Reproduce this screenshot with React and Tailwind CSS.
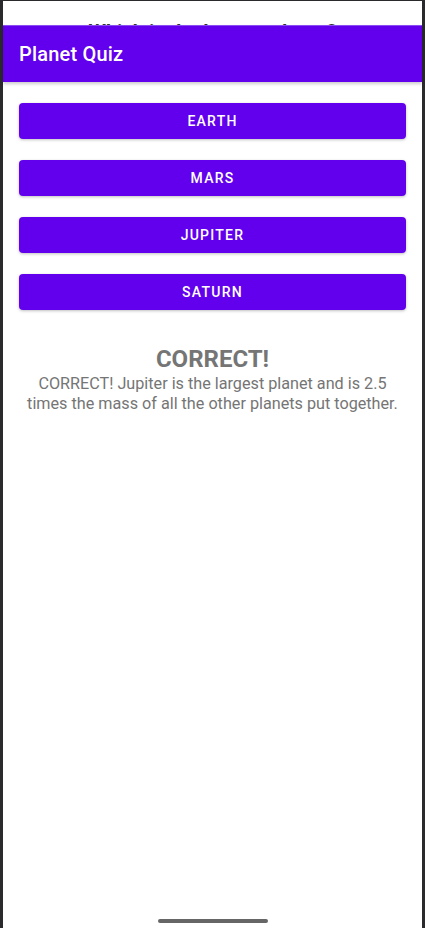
import React from 'react';

const answers = ['EARTH', 'MARS', 'JUPITER', 'SATURN'];

export default function App() {
  return (
    <div className="w-full h-[928px] bg-[#2a2a2c] pt-px px-[3px] overflow-hidden" style={{ fontFamily: 'Roboto, "Noto Sans", sans-serif' }}>
      <div className="relative h-full bg-white flex flex-col">
        {/* question text, mostly hidden behind the app bar */}
        <div className="absolute top-[19px] left-0 right-0 text-center text-[20px] leading-6 font-bold text-[#333]">
          Which is the largest planet?
        </div>

        {/* app bar */}
        <div className="relative z-10 mt-6 h-[57px] bg-[#6200ee] border-t border-[#8a4df2] shadow-[0_2px_3px_rgba(0,0,0,0.2)] flex items-center px-4">
          <h1 className="text-white text-[20px] font-medium tracking-[0.01em]">Planet Quiz</h1>
        </div>

        <main className="flex flex-col px-4 pt-[21px]">
          <div className="flex flex-col gap-[21px]">
            {answers.map((a) => (
              <button
                key={a}
                className="h-9 w-full rounded bg-[#6200ee] text-white text-[14px] font-medium tracking-[0.089em] shadow-[0_1px_3px_rgba(0,0,0,0.25)]"
              >
                {a}
              </button>
            ))}
          </div>

          <div className="mt-[34px] text-center text-[#757575]">
            <h2 className="text-[24px] leading-[30px] font-bold">CORRECT!</h2>
            <p className="text-[16.2px] leading-5 px-1">
              CORRECT! Jupiter is the largest planet and is 2.5 times the mass of all the other planets put together.
            </p>
          </div>
        </main>

        <div className="mt-auto mb-[5px] flex justify-center">
          <div className="w-[110px] h-1 rounded-full bg-[#666]" />
        </div>
      </div>
    </div>
  );
}
